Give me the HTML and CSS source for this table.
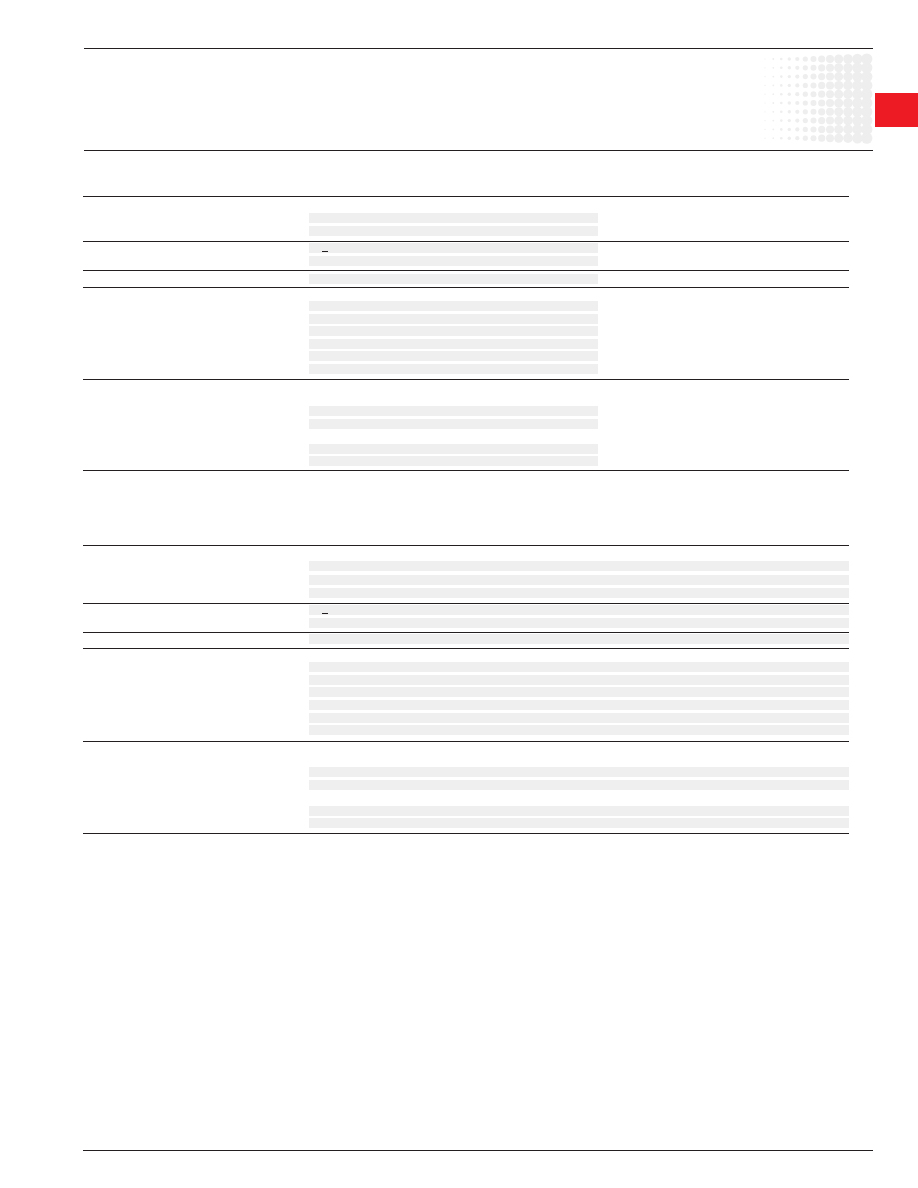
FILE: index.html
```html
<!DOCTYPE html>
<html lang="en">
<head>
<meta charset="utf-8">
<title>Datasheet</title>
<link rel="stylesheet" href="styles.css">
</head>
<body>
<div class="page">
  <header class="head">
    <div class="head-title"></div>
    <svg class="dots" width="113" height="101" viewBox="0 0 113 101" aria-hidden="true">
      <defs>
        <g id="dotrow" fill="#eeeeee">
          <circle cx="5" cy="0" r="0.6"/>
          <circle cx="13.3" cy="0" r="0.9"/>
          <circle cx="21.3" cy="0" r="1.3"/>
          <circle cx="29.3" cy="0" r="1.7"/>
          <circle cx="37.3" cy="0" r="2.1"/>
          <circle cx="45.3" cy="0" r="2.6"/>
          <circle cx="53.5" cy="0" r="3"/>
          <circle cx="61.7" cy="0" r="3.6"/>
          <circle cx="70" cy="0" r="4"/>
          <circle cx="78.7" cy="0" r="4.5"/>
          <circle cx="88" cy="0" r="4.8"/>
          <circle cx="97.4" cy="0" r="5.2"/>
          <circle cx="106.8" cy="0" r="5.6"/>
        </g>
      </defs>
      <use href="#dotrow" y="10"/>
      <use href="#dotrow" y="18.8"/>
      <use href="#dotrow" y="27.6"/>
      <use href="#dotrow" y="36.4"/>
      <use href="#dotrow" y="45.2"/>
      <use href="#dotrow" y="54"/>
      <use href="#dotrow" y="62.8"/>
      <use href="#dotrow" y="71.6"/>
      <use href="#dotrow" y="80.4"/>
      <use href="#dotrow" y="89.2"/>
    </svg>
  </header>
  <div class="tab"></div>

  <section class="spec spec-narrow spec-first">
    <div class="row r1a"><div class="label"></div><div class="vals"><div class="bar"></div><div class="bar"></div></div></div>
    <div class="row r1b"><div class="label"></div><div class="vals"><div class="bar"><span class="dash"></span></div><div class="bar"></div></div></div>
    <div class="row r1c"><div class="label"></div><div class="vals"><div class="bar"></div></div></div>
    <div class="row r1d"><div class="label"></div><div class="vals"><div class="bar"></div><div class="bar"></div><div class="bar"></div><div class="bar"></div><div class="bar"></div><div class="bar"></div></div></div>
    <div class="row r1e"><div class="label"></div><div class="vals"><div class="bar"></div><div class="bar"></div><div class="blank"></div><div class="bar"></div><div class="bar"></div></div></div>
  </section>

  <section class="spec spec-wide spec-second">
    <div class="row r2a"><div class="label"></div><div class="vals"><div class="bar"></div><div class="bar"></div><div class="bar"></div></div></div>
    <div class="row r2b"><div class="label"></div><div class="vals"><div class="bar"><span class="dash"></span></div><div class="bar"></div></div></div>
    <div class="row r2c"><div class="label"></div><div class="vals"><div class="bar"></div></div></div>
    <div class="row r2d"><div class="label"></div><div class="vals"><div class="bar"></div><div class="bar"></div><div class="bar"></div><div class="bar"></div><div class="bar"></div><div class="bar"></div></div></div>
    <div class="row r2e"><div class="label"></div><div class="vals"><div class="bar"></div><div class="bar"></div><div class="blank"></div><div class="bar"></div><div class="bar"></div></div></div>
  </section>

  <footer class="foot"></footer>
</div>
</body>
</html>
```
FILE: styles.css
```css
html, body {
  margin: 0;
  padding: 0;
  background: #ffffff;
  font-family: "Liberation Sans", Arial, sans-serif;
}

.page {
  position: relative;
  width: 918px;
  min-height: 1188px;
  box-sizing: border-box;
  padding-left: 83px;
  display: flex;
  flex-direction: column;
}

.head {
  margin-top: 48px;
  margin-left: 1px;
  width: 789px;
  height: 103px;
  box-sizing: border-box;
  border-top: 1px solid #231f20;
  border-bottom: 1px solid #231f20;
  display: flex;
  justify-content: space-between;
  align-items: flex-start;
}

.head-title {
  flex: 1;
}

.dots {
  display: block;
  flex: none;
}

.tab {
  position: absolute;
  right: 0;
  top: 93px;
  width: 43px;
  height: 34px;
  background: #ed1c24;
}

.spec {
  width: 766px;
  border-bottom: 1px solid #231f20;
}

.spec-first {
  margin-top: 45px;
}

.spec-second {
  margin-top: 74px;
}

.row {
  display: grid;
  grid-template-columns: 226px 1fr;
  border-top: 1px solid #231f20;
}

.vals {
  display: flex;
  flex-direction: column;
  gap: 2.6px;
}

.bar {
  height: 10px;
  background: #efefef;
  display: flex;
  align-items: flex-end;
}

.blank {
  height: 10px;
}

.spec-narrow .bar {
  width: 289px;
}

.spec-wide .bar {
  width: 540px;
}

.dash {
  display: block;
  width: 6px;
  height: 1px;
  margin: 0 0 1px 13px;
  background: #231f20;
}

/* table 1 row spacing */
.r1a .vals { padding: 16px 0 5.4px; }
.r1b .vals { padding: 1px 0 4.4px; }
.r1c .vals { padding: 3px 0 3px; }
.r1d .vals { padding: 13px 0 5px; }
.r1e .vals { padding: 26px 0 4px; }

/* table 2 row spacing */
.r2a .vals { padding: 15px 0 4.5px; gap: 3.5px; }
.r2b .vals { padding: 1.5px 0 4.4px; }
.r2c .vals { padding: 0.5px 0 4.5px; }
.r2d .vals { padding: 13px 0 6px; }
.r2e .vals { padding: 25px 0 5px; gap: 2.8px; }

.foot {
  margin-top: auto;
  margin-bottom: 37px;
  width: 790px;
  border-top: 1px solid #231f20;
}
```
